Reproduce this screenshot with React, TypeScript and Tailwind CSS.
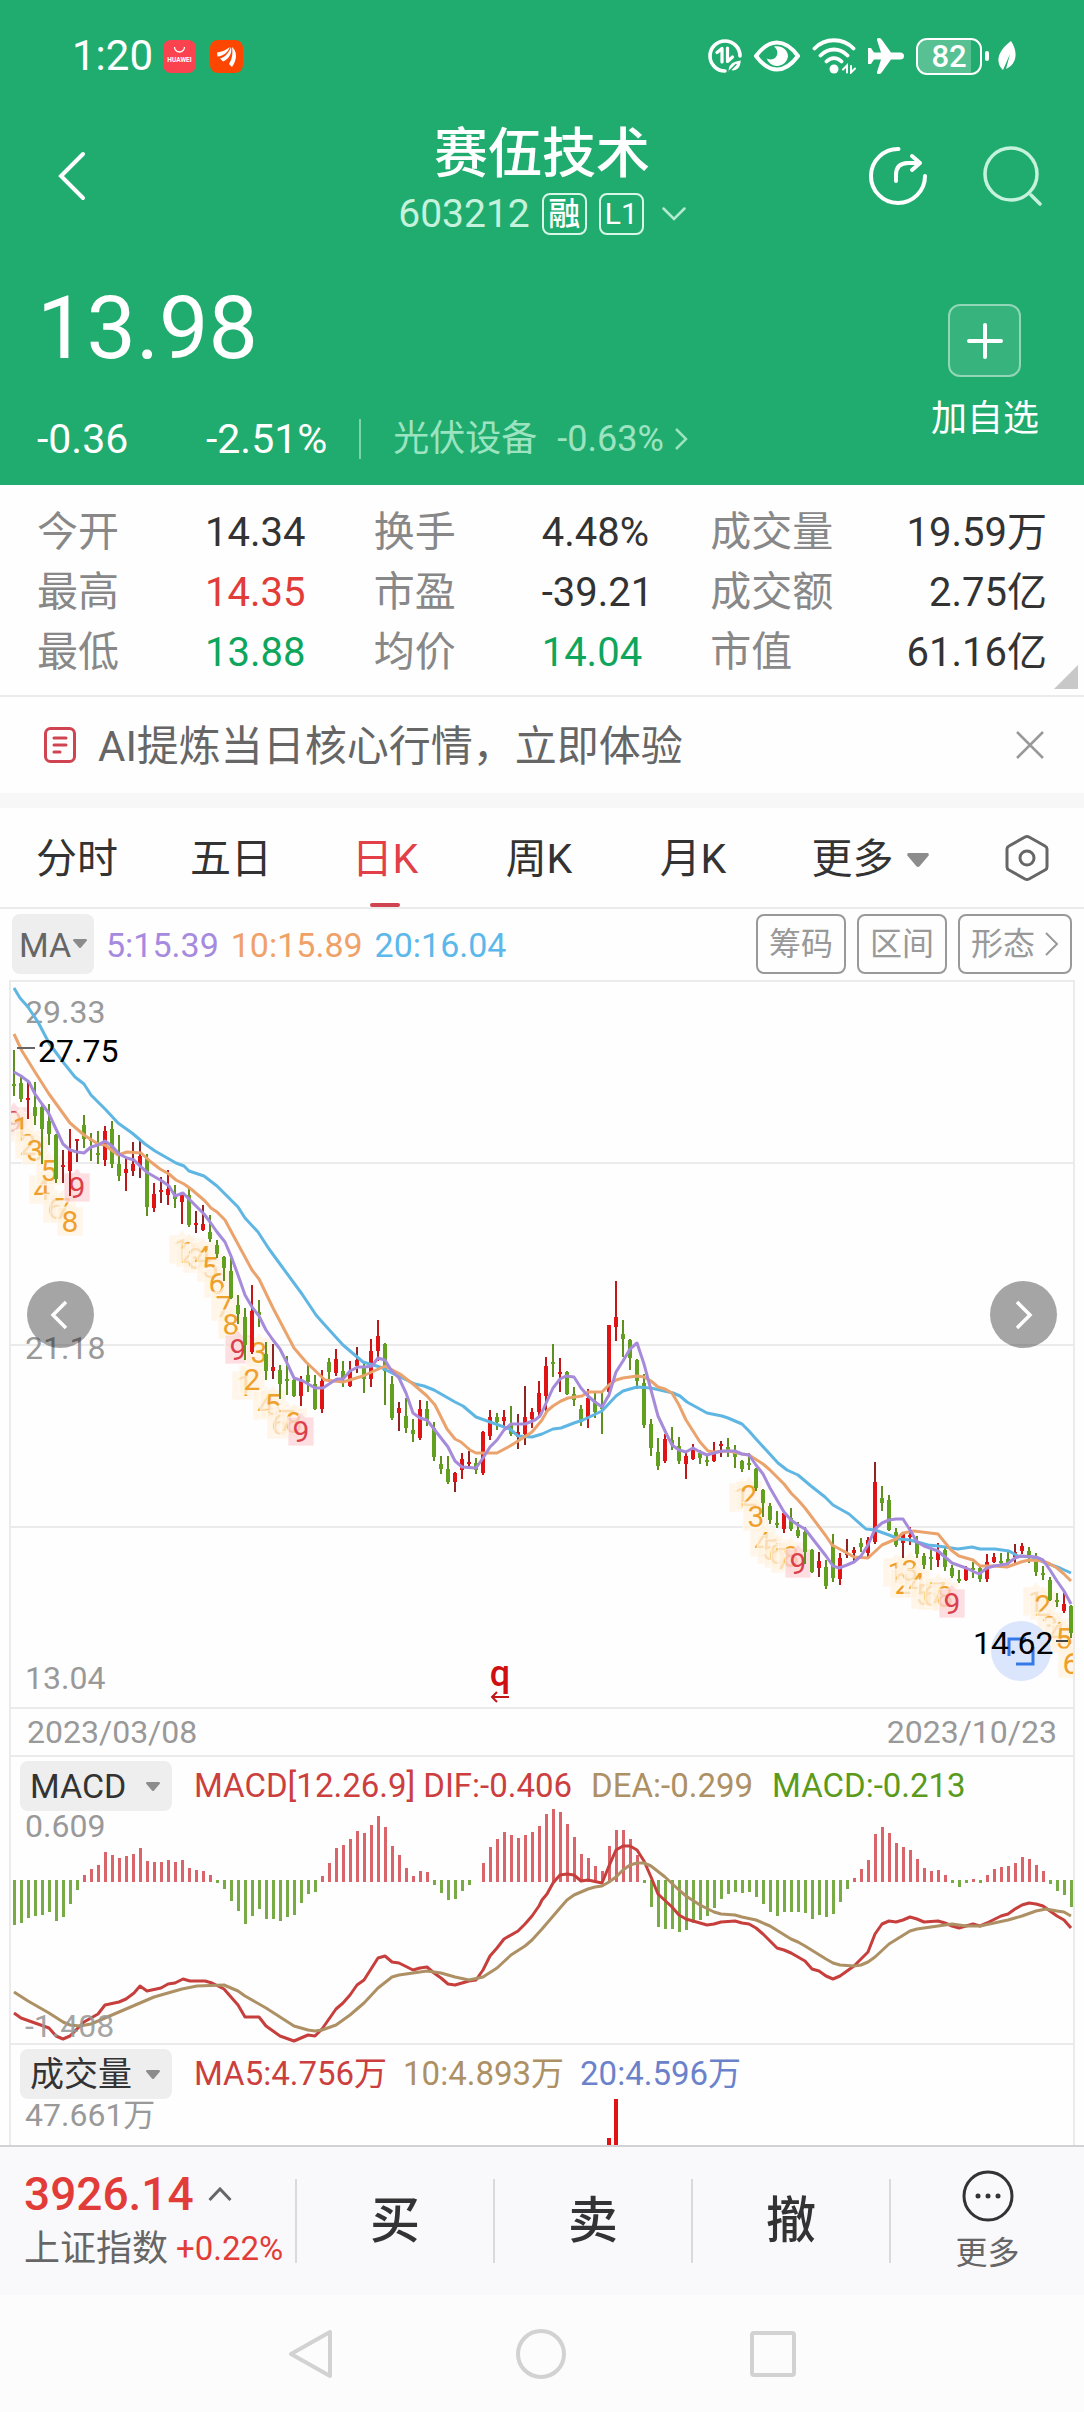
import type { ReactNode } from 'react';

type Candle = [number, number, number, number, 'g' | 'r' | 'd'];

// high, body top, body bottom, low (chart units), colour
const candles: Candle[] = [
  [70, 104, 106, 116, 'g'], [95, 103, 119, 122, 'g'], [100, 118, 120, 139, 'r'], [102, 127, 136, 145, 'g'],
  [125, 127, 149, 184, 'g'], [124, 141, 154, 165, 'g'], [154, 155, 199, 203, 'g'], [170, 185, 187, 203, 'd'],
  [149, 170, 191, 216, 'r'], [159, 159, 161, 182, 'd'], [135, 145, 159, 168, 'g'], [153, 159, 161, 181, 'g'],
  [151, 173, 175, 184, 'g'], [146, 151, 180, 186, 'r'], [141, 149, 184, 188, 'g'], [155, 184, 196, 201, 'g'],
  [177, 189, 193, 211, 'r'], [162, 184, 191, 196, 'd'], [160, 176, 186, 198, 'd'], [174, 179, 227, 236, 'g'],
  [203, 214, 228, 232, 'r'], [197, 210, 212, 223, 'd'], [190, 209, 215, 225, 'r'], [205, 216, 219, 228, 'g'],
  [214, 215, 222, 244, 'r'], [207, 215, 245, 247, 'g'], [231, 243, 245, 253, 'd'], [225, 244, 250, 251, 'd'],
  [235, 252, 259, 262, 'g'], [260, 265, 274, 278, 'g'], [276, 277, 288, 301, 'g'], [277, 291, 318, 319, 'g'],
  [315, 325, 334, 344, 'g'], [328, 337, 365, 380, 'g'], [305, 331, 372, 374, 'r'], [320, 332, 335, 347, 'g'],
  [362, 374, 391, 400, 'g'], [364, 387, 391, 399, 'd'], [385, 390, 404, 419, 'g'], [376, 399, 401, 415, 'g'],
  [399, 400, 416, 417, 'g'], [396, 400, 416, 426, 'r'], [384, 395, 402, 412, 'g'], [395, 404, 429, 430, 'g'],
  [390, 401, 429, 433, 'r'], [378, 382, 392, 400, 'g'], [369, 379, 393, 396, 'r'], [381, 391, 399, 407, 'g'],
  [381, 391, 406, 407, 'r'], [367, 380, 386, 393, 'd'], [381, 386, 399, 413, 'g'], [359, 371, 399, 407, 'r'],
  [340, 356, 371, 381, 'r'], [363, 364, 391, 425, 'g'], [396, 404, 438, 440, 'g'], [422, 428, 433, 451, 'd'],
  [418, 436, 448, 453, 'g'], [439, 450, 454, 462, 'g'], [420, 429, 458, 460, 'r'], [421, 429, 440, 446, 'g'],
  [442, 448, 477, 481, 'g'], [476, 484, 489, 494, 'g'], [476, 489, 502, 504, 'g'], [492, 493, 502, 512, 'd'],
  [473, 479, 490, 499, 'r'], [471, 482, 484, 488, 'd'], [478, 483, 490, 494, 'g'], [451, 452, 493, 495, 'r'],
  [430, 437, 456, 460, 'r'], [433, 437, 442, 450, 'g'], [430, 437, 441, 447, 'r'], [426, 444, 454, 456, 'g'],
  [434, 452, 457, 469, 'd'], [406, 437, 454, 465, 'd'], [428, 432, 439, 448, 'r'], [401, 413, 432, 437, 'r'],
  [377, 386, 416, 431, 'r'], [364, 382, 384, 397, 'g'], [378, 392, 394, 412, 'r'], [391, 392, 414, 415, 'g'],
  [407, 414, 420, 426, 'g'], [425, 429, 442, 446, 'g'], [409, 418, 438, 448, 'r'], [413, 421, 432, 438, 'g'],
  [413, 427, 429, 454, 'g'], [345, 345, 412, 417, 'r'], [301, 337, 347, 361, 'r'], [340, 354, 359, 377, 'g'],
  [359, 360, 378, 390, 'g'], [379, 380, 401, 409, 'g'], [394, 403, 445, 448, 'g'], [439, 444, 468, 476, 'g'],
  [458, 472, 486, 490, 'g'], [454, 459, 481, 483, 'r'], [447, 460, 465, 470, 'g'], [457, 466, 481, 484, 'g'],
  [473, 476, 484, 499, 'r'], [464, 468, 479, 480, 'r'], [470, 473, 478, 484, 'g'], [475, 480, 482, 486, 'g'],
  [462, 471, 481, 482, 'r'], [461, 464, 466, 477, 'd'], [458, 467, 472, 477, 'g'], [465, 472, 477, 488, 'g'],
  [480, 481, 489, 492, 'g'], [473, 483, 485, 490, 'g'], [488, 489, 508, 511, 'g'], [509, 510, 523, 537, 'g'],
  [523, 526, 540, 544, 'g'], [531, 543, 545, 548, 'g'], [532, 533, 549, 553, 'r'], [528, 538, 549, 551, 'g'],
  [542, 550, 556, 558, 'g'], [547, 552, 572, 584, 'g'], [569, 570, 592, 593, 'g'], [572, 581, 588, 597, 'd'],
  [580, 587, 606, 609, 'g'], [554, 565, 598, 602, 'g'], [573, 578, 599, 605, 'r'], [559, 573, 575, 578, 'd'],
  [567, 570, 573, 582, 'd'], [558, 563, 567, 572, 'g'], [557, 560, 573, 577, 'r'], [482, 502, 562, 564, 'd'],
  [506, 518, 523, 531, 'g'], [515, 520, 550, 551, 'g'], [548, 552, 565, 567, 'g'], [553, 554, 563, 578, 'd'],
  [547, 555, 557, 565, 'r'], [556, 561, 574, 578, 'g'], [573, 576, 585, 589, 'g'], [570, 577, 579, 590, 'g'],
  [563, 571, 580, 587, 'r'], [568, 570, 587, 591, 'g'], [585, 588, 596, 598, 'g'], [590, 599, 601, 603, 'g'],
  [586, 588, 600, 601, 'r'], [582, 588, 590, 598, 'g'], [587, 588, 599, 602, 'g'], [574, 582, 599, 602, 'r'],
  [573, 577, 582, 583, 'r'], [573, 581, 583, 585, 'g'], [571, 579, 583, 585, 'g'], [564, 572, 577, 583, 'd'],
  [563, 566, 571, 574, 'r'], [567, 571, 575, 583, 'g'], [573, 582, 592, 596, 'g'], [586, 593, 595, 600, 'g'],
  [597, 600, 620, 621, 'g'], [613, 620, 622, 627, 'g'], [613, 624, 631, 633, 'r'], [625, 626, 653, 658, 'g'],
];

// [first candle index, first number, how many]
const countRuns = [[0, 9, 1], [1, 1, 9], [24, 1, 9], [33, 1, 9], [104, 1, 9], [126, 1, 9], [146, 1, 6]];

const ma20 = '14,8 20,18 28,27 38,42 49,63 63,82 75,97 84,104 91,115 106,130 118,143 132,153 145,164 155,171 176,183 184,186 189,191 204,196 217,206 227,216 238,227 245,238 258,252 269,269 280,284 302,314 316,335 323,343 343,365 363,382 380,387 394,394 415,404 424,406 434,410 455,422 463,426 476,437 490,442 510,449 518,456 532,457 542,454 553,449 561,448 574,443 583,440 602,431 616,416 623,411 637,407 651,408 673,413 680,416 687,422 707,433 722,436 728,438 742,444 749,451 756,459 778,483 787,490 798,495 811,506 825,517 833,525 849,534 866,549 875,550 889,555 899,559 910,560 928,565 938,566 958,569 972,567 980,569 995,569 1009,571 1018,576 1032,577 1046,583 1060,588 1071,593';
const ma10 = '14,54 22,71 35,92 49,114 70,143 84,155 98,164 105,165 118,175 127,172 141,173 151,182 160,189 169,194 176,200 184,204 191,209 205,221 211,228 217,232 225,240 239,266 252,290 259,299 273,328 294,368 306,382 325,400 343,402 363,396 385,386 400,394 413,404 427,416 435,425 447,449 455,459 461,462 470,470 476,473 497,473 510,466 518,461 532,452 542,440 547,431 553,426 561,421 568,418 582,416 588,412 602,412 609,405 616,400 623,398 637,396 644,397 651,401 658,407 665,409 672,413 679,425 686,440 700,462 708,471 714,472 729,471 742,474 749,475 763,484 770,490 784,504 791,513 798,520 805,528 826,556 832,565 847,573 854,577 868,578 882,565 896,559 903,553 914,551 938,554 951,570 959,576 973,580 980,586 994,586 1007,587 1021,582 1029,580 1043,581 1050,584 1057,588 1064,594 1071,601';
const ma5 = '14,92 21,96 29,102 35,114 42,124 48,132 56,149 63,164 70,170 77,172 84,173 91,167 98,165 105,161 112,166 119,174 127,178 134,180 141,187 148,193 162,201 169,206 175,216 183,213 189,219 204,234 210,242 217,252 225,262 231,276 238,295 245,315 252,327 259,336 266,350 273,360 280,369 287,383 294,398 303,401 315,408 323,408 332,402 337,399 343,399 350,391 358,387 365,387 372,386 378,378 385,380 391,390 399,398 406,413 413,433 420,438 427,440 441,458 448,467 455,481 462,487 476,488 483,478 490,467 497,460 504,450 511,444 525,444 535,440 540,436 542,432 553,408 560,399 566,396 574,397 581,408 588,416 595,422 602,427 609,415 616,392 623,381 630,369 637,363 644,384 651,410 658,436 666,453 672,465 679,470 686,472 693,468 700,472 707,475 714,473 722,471 735,471 742,474 749,475 756,485 763,494 770,508 784,532 791,540 798,545 805,549 812,558 826,576 833,586 839,588 847,585 854,582 861,576 868,565 875,549 882,543 889,540 896,539 903,539 910,550 917,562 924,566 938,571 952,583 966,588 979,594 987,588 994,586 1007,584 1015,578 1021,576 1036,577 1043,580 1050,590 1057,601 1064,611 1071,624';

const macdBars = [
  -45, -43, -38, -36, -35, -32, -41, -37, -24, -10, 7, 13, 17, 30, 27, 24, 26, 28, 34, 21, 20, 20, 22, 20, 22, 14, 12, 11, 7,
  -3, -9, -21, -31, -44, -36, -29, -39, -39, -41, -37, -35, -23, -14, -12, 6, 19, 34, 37, 43, 51, 49, 57, 66, 55, 36, 27, 14,
  6, 11, 10, -5, -13, -20, -19, -11, -5, 0, 19, 35, 43, 50, 47, 44, 47, 50, 56, 68, 73, 70, 58, 45, 28, 24, 16, 11, 36, 52, 52,
  43, 27, -3, -27, -47, -49, -49, -52, -50, -43, -40, -36, -28, -19, -14, -12, -13, -12, -17, -24, -32, -36, -32, -32, -32,
  -33, -39, -35, -37, -34, -22, -9, 4, 13, 22, 48, 55, 49, 39, 35, 32, 23, 14, 11, 12, 7, -3, -7, -3, 3, -3, 7, 13, 15, 16,
  19, 25, 23, 17, 11, -4, -11, -15, -27,
];

const difLine = '14,257 21,262 35,267 49,272 56,280 63,283 70,280 84,266 98,258 105,249 119,246 126,243 134,237 140,230 147,235 161,232 168,228 175,227 183,223 190,225 205,225 212,227 224,233 231,241 238,249 245,261 259,261 266,270 280,280 294,285 308,279 315,280 322,273 336,253 343,247 350,239 357,229 364,224 378,202 385,200 392,206 399,207 413,214 420,212 427,211 434,217 441,222 448,228 455,229 469,225 476,224 483,214 490,200 497,192 504,183 518,175 525,168 532,160 539,150 542,144 547,138 553,127 560,119 567,118 574,119 581,125 588,124 602,127 609,110 616,94 623,90 630,90 637,94 644,105 651,121 658,138 672,151 679,159 686,163 700,167 707,169 714,168 721,166 735,165 742,167 749,168 756,172 763,178 777,192 784,194 791,197 805,205 812,213 819,215 826,220 833,223 840,220 854,210 868,196 875,178 882,168 889,165 896,166 903,164 910,161 917,163 924,166 938,165 945,167 952,170 959,172 966,170 973,168 980,170 987,167 1001,160 1008,158 1015,153 1022,149 1029,147 1036,148 1043,150 1050,155 1057,160 1064,164 1071,172';
const deaLine = '14,236 28,245 49,257 63,266 70,269 80,270 91,268 105,262 119,256 133,250 140,247 154,241 168,237 182,233 197,230 224,229 238,235 245,240 266,252 280,261 294,270 308,274 315,275 322,274 336,269 350,259 364,247 378,232 392,221 399,219 413,217 427,215 441,217 455,221 469,224 483,221 497,212 511,199 525,190 532,184 542,173 560,152 567,144 574,139 588,133 595,131 602,130 609,126 616,121 623,114 630,109 637,107 644,107 651,110 665,121 679,134 686,140 700,149 714,156 721,158 735,159 742,161 756,164 770,170 791,183 798,186 805,190 826,203 833,207 840,209 854,210 861,209 868,206 875,201 889,188 910,175 917,173 938,170 952,168 966,170 980,170 994,167 1008,164 1022,160 1036,155 1046,153 1057,155 1064,156 1071,160';

const stats = [
  [
    { label: '今开', value: '14.34', color: 'text-[#333]' },
    { label: '最高', value: '14.35', color: 'text-[#e23c39]' },
    { label: '最低', value: '13.88', color: 'text-[#0ea55c]' },
  ],
  [
    { label: '换手', value: '4.48%', color: 'text-[#333]' },
    { label: '市盈', value: '-39.21', color: 'text-[#333]' },
    { label: '均价', value: '14.04', color: 'text-[#0ea55c]' },
  ],
  [
    { label: '成交量', value: '19.59万', color: 'text-[#333]' },
    { label: '成交额', value: '2.75亿', color: 'text-[#333]' },
    { label: '市值', value: '61.16亿', color: 'text-[#333]' },
  ],
];

const tabs = ['分时', '五日', '日K', '周K', '月K'];

const xAt = (i: number) => 14 + i * 7;

const Caret = ({ className }: { className: string }) => (
  <svg viewBox="0 0 14 9" className={className} fill="#8c8c8c">
    <path d="M1 0h12q1 0 1 1.500L8 8.500q-1 1-2 0L0 1.500Q0 0 1 0z" />
  </svg>
);

const StatusBar = () => (
  <div className="flex h-28 items-center justify-between pl-[72px] pr-[68px] text-white">
    <div className="flex items-center">
      <span className="text-[42px] leading-none">1:20</span>
      <svg viewBox="0 0 33 33" className="ml-[10px] size-[33px]">
        <rect width="33" height="33" rx="8" fill="#fb4350" />
        <path d="M11.500 7a5 5 0 0 0 10 0" fill="none" stroke="#fff" strokeWidth="1.300" />
        <text x="16.500" y="21.500" textAnchor="middle" fontSize="6.500" fontWeight="700" fill="#fff">HUAWEI</text>
      </svg>
      <svg viewBox="0 0 33 33" className="ml-[14px] size-[33px]">
        <rect width="33" height="33" rx="8" fill="#fd4700" />
        <path d="M7 12.500c5-.5 9-2.500 13-5.500-2 5-6 9-12.500 9.500zM10 18.500c6-2 9-6 11-11.500 1.500 6-2 12-8 14.500zM19 24c3-5 4-10 3-17 3.500 3 4 6 4 10-.5 4-2 7-4 10z" fill="#fff" />
      </svg>
    </div>
    <div className="flex items-center gap-3">
      <svg viewBox="0 0 34 34" className="size-[34px]" fill="none" stroke="#fff" strokeLinecap="round">
        <path d="M32 17A15 15 0 1 0 17 32" strokeWidth="3.600" />
        <path d="M9 13.500l5-4V23M19.500 9v13.500l5-4.500" strokeWidth="3.200" strokeLinejoin="round" />
        <path d="M20 33c-1-8 4-11 13.500-12.500C33.500 29 29 34 22 31.500l6-6" fill="#fff" stroke="#21ac6f" strokeWidth="1.500" />
      </svg>
      <svg viewBox="0 0 46 32" className="h-8 w-[46px]">
        <path d="M2 16Q12 2.500 23 2.500T44 16Q34 29.500 23 29.500T2 16z" fill="none" stroke="#fff" strokeWidth="4" strokeLinejoin="round" />
        <path d="M20 6.500c8-1.500 14 3.500 14 10A11 11 0 0 1 12.500 18c2 2.500 9 2 10.500-3 1-3.500 0-6-3-8.500z" fill="#fff" />
      </svg>
      <svg viewBox="0 0 44 36" className="h-9 w-11" fill="none" stroke="#fff" strokeWidth="3.800" strokeLinecap="round">
        <path d="M2.500 10.500C13-.5 31-.5 41.500 10.500M8.500 17.500c8-8 19-8 27 0M14.500 23.500c4.500-4.500 10.500-4.500 15 0" />
        <circle cx="22" cy="31" r="4.500" fill="#fff" stroke="none" />
        <path d="M31 31.500l4-4v7M39 28v6.500l4-4" strokeWidth="2" />
      </svg>
      <svg viewBox="0 0 36 36" className="size-9" fill="#fff">
        <path d="M9 2q-.5-2 2-2 2 0 3 2l9 12.500h9q4 0 4 3.500t-4 3.500h-9L14 34q-1 2-3 2-2.500 0-2-2l4-12.500H6L3 26H0V10h3l3 4.500h7z" />
      </svg>
      <div className="flex items-center gap-[3px]">
        <div className="relative flex h-[37px] w-[66px] items-center justify-center overflow-hidden rounded-[11px] border-2 border-white">
          <div className="absolute inset-y-0 left-0 w-[85%] bg-white/25" />
          <span className="relative text-[31px] font-medium leading-none">82</span>
        </div>
        <div className="h-[10px] w-1 rounded-sm bg-white" />
        <svg viewBox="0 0 18 30" className="ml-[6px] h-[30px] w-[18px]">
          <path d="M13 0c8 12 5 24-5 28l4-15-7 16C-4 20 1 9 13 0z" fill="#fff" />
        </svg>
      </div>
    </div>
  </div>
);

const Header = () => (
  <header className="h-[485px] bg-[#21ac6f] text-white">
    <StatusBar />
    <div className="grid h-[128px] grid-cols-[1fr_auto_1fr] items-center px-[42px]">
      <button aria-label="返回" className="justify-self-start pl-[15px]">
        <svg viewBox="0 0 30 50" className="h-[50px] w-[30px]" fill="none" stroke="currentColor" strokeWidth="4" strokeLinecap="round">
          <path d="M26 3L4 25l22 22" />
        </svg>
      </button>
      <div className="flex flex-col items-center pt-1">
        <h1 className="text-[54px] font-medium leading-[72px]">赛伍技术</h1>
        <div className="flex h-[46px] items-center">
          <span className="text-[39px] leading-none text-[#c5f2dc]">603212</span>
          <span className="ml-3 flex h-[42px] w-[45px] items-center justify-center rounded-lg border-2 border-[#d9f7e8] text-[32px] font-medium leading-none">融</span>
          <span className="ml-3 flex h-[42px] w-[45px] items-center justify-center rounded-lg border-2 border-[#d9f7e8] text-[30px] leading-none">L1</span>
          <svg viewBox="0 0 24 14" className="ml-[18px] h-[14px] w-6" fill="none" stroke="#b5ead0" strokeWidth="2.500" strokeLinecap="round">
            <path d="M1.500 1.500L12 12 22.500 1.500" />
          </svg>
        </div>
      </div>
      <div className="flex items-center gap-[54px] justify-self-end">
        <button aria-label="分享">
          <svg viewBox="0 0 60 60" className="size-[60px]" fill="none" stroke="currentColor" strokeWidth="4" strokeLinecap="round" strokeLinejoin="round">
            <path d="M30.500 3A27 27 0 1 0 57 30" />
            <path d="M28 35v-6q0-12 12-12h12M44 10l8 7-8 7" />
          </svg>
        </button>
        <button aria-label="搜索">
          <svg viewBox="0 0 60 60" className="size-[60px]" fill="none" stroke="#c5f2dc" strokeWidth="3.500" strokeLinecap="round">
            <circle cx="29" cy="28" r="26" />
            <path d="M49 49l9 9" />
          </svg>
        </button>
      </div>
    </div>
    <div className="flex justify-between pl-[37px] pr-[45px]">
      <div>
        <div className="flex h-[175px] items-center text-[88px] leading-none">13.98</div>
        <div className="flex h-12 items-center text-[41px] leading-none">
          <span className="w-[169px]">-0.36</span>
          <span>-2.51%</span>
          <span className="ml-8 h-10 w-[2px] bg-[#7fd3ab]" />
          <a href="#sector" className="ml-8 flex items-center text-[36px] text-[#9ce4c1]">
            光伏设备
            <span className="ml-5">-0.63%</span>
            <svg viewBox="0 0 14 24" className="ml-[10px] h-6 w-[14px]" fill="none" stroke="currentColor" strokeWidth="2.500">
              <path d="M2 2l10 10L2 22" />
            </svg>
          </a>
        </div>
      </div>
      <button className="flex flex-col items-center pt-[64px]">
        <span className="flex size-[73px] items-center justify-center rounded-xl border-2 border-[#90d6b7] bg-white/10">
          <svg viewBox="0 0 36 36" className="size-9" stroke="currentColor" strokeWidth="4" strokeLinecap="round">
            <path d="M18 2v32M2 18h32" />
          </svg>
        </span>
        <span className="mt-[22px] text-[36px] leading-[40px]">加自选</span>
      </button>
    </div>
  </header>
);

const Stats = () => (
  <section className="relative grid h-[212px] grid-cols-3 border-b-2 border-[#ebebeb] px-[37px] pt-[18px]">
    {stats.map((column, i) => (
      <dl key={i}>
        {column.map((item) => (
          <div key={item.label} className="flex h-[60px] items-center text-[40px]">
            <dt className="w-[168px] text-[41px] text-[#888]">{item.label}</dt>
            <dd className={`${item.color} ${i === 2 ? 'ml-auto' : ''}`}>{item.value}</dd>
          </div>
        ))}
      </dl>
    ))}
    <svg viewBox="0 0 24 24" className="absolute bottom-[6px] right-[6px] size-6">
      <path d="M24 0v24H0z" fill="#c8c8c8" />
    </svg>
  </section>
);

const AiBanner = () => (
  <section className="flex h-24 items-center pl-11 pr-10">
    <svg viewBox="0 0 32 36" className="h-9 w-8" fill="none" stroke="#cf4450" strokeWidth="3" strokeLinecap="round">
      <rect x="1.500" y="1.500" width="29" height="33" rx="5" />
      <path d="M10 11h12M10 18h12M10 25h6" />
    </svg>
    <a href="#ai" className="ml-[22px] pt-1 text-[42px] leading-none text-[#666]">AI提炼当日核心行情，立即体验</a>
    <button aria-label="关闭" className="ml-auto">
      <svg viewBox="0 0 28 28" className="size-7" stroke="#999" strokeWidth="2.500">
        <path d="M1 1l26 26M27 1L1 27" />
      </svg>
    </button>
  </section>
);

const PeriodTabs = () => (
  <nav className="grid h-[101px] grid-cols-[repeat(5,154fr)_200fr_114fr] border-b-2 border-[#ebebeb] text-[41px] text-[#333]">
    {tabs.map((tab) => (
      <button
        key={tab}
        className={`relative flex items-center justify-center pt-1 ${tab === '日K' ? 'text-[#e23f49]' : ''}`}
      >
        {tab}
        {tab === '日K' && <span className="absolute bottom-0 left-1/2 h-1 w-[30px] -translate-x-1/2 rounded-sm bg-[#cf4450]" />}
      </button>
    ))}
    <button className="flex items-center justify-center gap-[13px] pt-1">
      更多
      <Caret className="h-[14px] w-[22px]" />
    </button>
    <button aria-label="设置" className="flex items-center justify-center">
      <svg viewBox="0 0 44 48" className="h-12 w-11" fill="none" stroke="#666" strokeWidth="3">
        <path d="M20 3q2-1 4 0l16 9q2 1 2 3v18q0 2-2 3l-16 9q-2 1-4 0L4 36q-2-1-2-3V15q0-2 2-3z" />
        <circle cx="22" cy="24" r="7" />
      </svg>
    </button>
  </nav>
);

const ToolButton = ({ children }: { children: ReactNode }) => (
  <button className="flex h-[60px] items-center rounded-lg border-2 border-[#999] px-[11px] text-[32px] text-[#999]">
    {children}
  </button>
);

const MaToolbar = () => (
  <div className="flex h-[71px] items-center pb-[2px] pl-3 pr-3 text-[34px] leading-[40px]">
    <button className="flex h-[60px] w-[82px] items-center justify-center gap-[2px] rounded-lg bg-[#eee] text-[#666]">
      <span className="pt-[2px]">MA</span>
      <Caret className="h-[9px] w-[14px]" />
    </button>
    <div className="flex gap-3 pl-3 pt-[2px]">
      <span className="text-[#a58ae0]">5:15.39</span>
      <span className="text-[#f0a168]">10:15.89</span>
      <span className="text-[#5cb8ea]">20:16.04</span>
    </div>
    <div className="ml-auto flex gap-[11px]">
      <ToolButton>筹码</ToolButton>
      <ToolButton>区间</ToolButton>
      <ToolButton>
        形态
        <svg viewBox="0 0 14 24" className="ml-[10px] h-6 w-[14px]" fill="none" stroke="currentColor" strokeWidth="2">
          <path d="M1 1l11 11L1 23" />
        </svg>
      </ToolButton>
    </div>
  </div>
);

const KLineChart = () => (
  <div className="relative">
    <svg viewBox="11 0 1062 727" className="block w-full" fontSize="32">
      <g stroke="#ebebeb" strokeWidth="2">
        <path d="M11 1h1062M11 183h1062M11 365h1062M11 547h1062" />
      </g>
      <g fill="#999">
        <text x="25" y="43">29.33</text>
        <text x="25" y="379">21.18</text>
        <text x="25" y="709">13.04</text>
      </g>

      {/* nine-turn counters */}
      {countRuns.map(([start, first, count]) =>
        Array.from({ length: count }, (_, k) => {
          const n = first + k;
          const x = xAt(start + k);
          const y = candles[start + k][3] + 8;
          return (
            <g key={start + k}>
              <path
                d={`M${x - 13} ${y + 3}h9l4-5 4 5h9v29h-26z`}
                fill={n === 9 ? '#fcd4d8' : '#fff1e0'}
                fillOpacity="0.75"
                stroke="#fff"
                strokeOpacity="0.7"
              />
              <text x={x} y={y + 28} textAnchor="middle" fontSize="30" fill={n === 9 ? '#db3f4c' : '#eea02c'}>{n}</text>
            </g>
          );
        })
      )}

      {candles.map(([high, top, bottom, low, color], i) => (
        <g key={i}>
          <rect x={xAt(i) - 1} y={high} width="2" height={low - high} fill={color === 'g' ? '#5f8f1f' : color === 'r' ? '#c01818' : '#8f2424'} />
          <rect x={xAt(i) - 2} y={top} width="4" height={bottom - top} fill={color === 'g' ? '#62a01f' : '#e01414'} />
        </g>
      ))}

      <g fill="none" strokeWidth="3" strokeLinejoin="round">
        <polyline points={ma20} stroke="#5fb6e3" />
        <polyline points={ma10} stroke="#eba36d" />
        <polyline points={ma5} stroke="#a68bdb" />
      </g>

      <path d="M17 68h18" stroke="#666" strokeWidth="2" />
      <text x="38" y="82">27.75</text>

      <circle cx="1021" cy="671" r="30" fill="#dbe6fc" />
      <path d="M1009 676v-17h17M1033 667v17h-17" fill="none" stroke="#3479e8" strokeWidth="3" />
      <text x="973" y="674">14.62</text>
      <path d="M1056 661h12" stroke="#444" strokeWidth="2" />

      <text x="500" y="706" textAnchor="middle" fontSize="36" fontWeight="500" fill="#d01010">q</text>
      <path d="M509 717h-17m5-5l-5 5 5 5" fill="none" stroke="#c01818" strokeWidth="2" />
    </svg>
    <button aria-label="上一段" className="absolute left-4 top-[301px] flex size-[67px] items-center justify-center rounded-full bg-black/35">
      <svg viewBox="0 0 18 30" className="mr-1 h-[30px] w-[18px]" fill="none" stroke="#fff" strokeWidth="3.500">
        <path d="M16 2L3 15l13 13" />
      </svg>
    </button>
    <button aria-label="下一段" className="absolute right-4 top-[301px] flex size-[67px] items-center justify-center rounded-full bg-black/35">
      <svg viewBox="0 0 18 30" className="h-[30px] w-[18px]" fill="none" stroke="#fff" strokeWidth="3.500">
        <path d="M2 2l13 13L2 28" />
      </svg>
    </button>
  </div>
);

const IndicatorHead = ({ name, children }: { name: string; children: ReactNode }) => (
  <div className="flex h-[55px] items-start pl-[9px] pt-1 text-[33px] leading-[50px]">
    <button className="mr-[22px] flex h-[50px] w-[152px] items-center justify-between rounded-lg bg-[#eee] pl-[10px] pr-3 text-[34px] text-[#333]">
      <span>{name}</span>
      <Caret className="h-[9px] w-[14px]" />
    </button>
    {children}
  </div>
);

const MacdPanel = () => (
  <div className="border-t-2 border-[#ebebeb]">
    <IndicatorHead name="MACD">
      <span className="text-[#cc3f3f]">MACD[12.26.9]</span>
      <span className="ml-[8px] text-[#cc3f3f]">DIF:-0.406</span>
      <span className="ml-[19px] text-[#ad9064]">DEA:-0.299</span>
      <span className="ml-[19px] text-[#5b9a1a]">MACD:-0.213</span>
    </IndicatorHead>
    <svg viewBox="11 56 1062 231" className="block w-full overflow-visible" fontSize="32">
      <text x="25" y="81" fill="#999">0.609</text>
      {macdBars.map((v, i) =>
        v === 0 ? null : (
          <rect
            key={i}
            x={xAt(i) - 1}
            y={v > 0 ? 126 - v : 124}
            width="3"
            height={Math.abs(v)}
            fill={v > 0 ? '#d9656a' : '#78ab45'}
          />
        )
      )}
      <g fill="none" strokeWidth="3" strokeLinejoin="round">
        <polyline points={difLine} stroke="#c63f3c" />
        <polyline points={deaLine} stroke="#ad9064" />
      </g>
      <text x="25" y="281" fill="#999" fillOpacity="0.9">-1.408</text>
    </svg>
  </div>
);

const VolumePanel = () => (
  <div className="border-t-2 border-[#ebebeb]">
    <IndicatorHead name="成交量">
      <span className="text-[#cc3f3f]">MA5:4.756万</span>
      <span className="ml-4 text-[#ad9064]">10:4.893万</span>
      <span className="ml-4 text-[#6b82cb]">20:4.596万</span>
    </IndicatorHead>
    <svg viewBox="11 0 1062 45" className="block w-full overflow-visible" fontSize="32">
      <text x="25" y="26" fill="#999">47.661万</text>
      <rect x="607" y="38" width="4" height="7" fill="#e01414" />
      <rect x="614" y="-1" width="4" height="46" fill="#e01414" />
    </svg>
  </div>
);

const TradeBar = () => (
  <footer className="grid h-[150px] grid-cols-[295fr_198fr_198fr_198fr_195fr] border-t-2 border-[#d2d2d6] bg-[#f9f9fb] text-[#333]">
    <div className="flex flex-col whitespace-nowrap pl-6 pt-[20px]">
      <div className="flex items-center gap-[14px] text-[46px] font-medium leading-[54px] text-[#e23c39]">
        3926.14
        <svg viewBox="0 0 24 14" className="h-[14px] w-6" fill="none" stroke="#666" strokeWidth="3">
          <path d="M1.500 13L12 2l10.500 11" />
        </svg>
      </div>
      <div className="flex items-center text-[36px] leading-[56px] text-[#666]">
        上证指数
        <span className="ml-2 text-[33px] text-[#e23c39]">+0.22%</span>
      </div>
    </div>
    {['买', '卖', '撤'].map((label) => (
      <button key={label} className="flex items-center text-[50px] font-medium">
        <span className="h-[84px] w-[2px] bg-[#dadade]" />
        <span className="flex-1">{label}</span>
      </button>
    ))}
    <button className="flex items-center text-[32px] text-[#666]">
      <span className="h-[84px] w-[2px] bg-[#dadade]" />
      <span className="flex flex-1 flex-col items-center pt-1">
        <svg viewBox="0 0 52 52" className="size-[52px]" fill="#333">
          <circle cx="26" cy="26" r="24" fill="none" stroke="#333" strokeWidth="3" />
          <circle cx="16" cy="26" r="2.500" />
          <circle cx="26" cy="26" r="2.500" />
          <circle cx="36" cy="26" r="2.500" />
        </svg>
        <span className="mt-2 leading-[46px]">更多</span>
      </span>
    </button>
  </footer>
);

const SystemNav = () => (
  <div className="flex h-[117px] items-center justify-center gap-[184px] bg-[#fcfcfc]">
    <button aria-label="后退">
      <svg viewBox="0 0 44 50" className="h-[50px] w-11" fill="none" stroke="#d2d2d2" strokeWidth="4" strokeLinejoin="round">
        <path d="M42 3v44L3 25z" />
      </svg>
    </button>
    <button aria-label="主页">
      <svg viewBox="0 0 50 50" className="size-[50px]" fill="none" stroke="#d2d2d2" strokeWidth="4">
        <circle cx="25" cy="25" r="23" />
      </svg>
    </button>
    <button aria-label="多任务">
      <svg viewBox="0 0 46 46" className="size-[46px]" fill="none" stroke="#d2d2d2" strokeWidth="4" strokeLinejoin="round">
        <rect x="2" y="2" width="42" height="42" rx="2" />
      </svg>
    </button>
  </div>
);

export default function App() {
  return (
    <div className="min-h-screen bg-[#fefefe] font-[Roboto,'Noto_Sans_CJK_SC',sans-serif] text-black">
      <Header />
      <Stats />
      <AiBanner />
      <div className="h-[15px] bg-[#f7f7f7]" />
      <PeriodTabs />
      <MaToolbar />
      <main className="mx-[9px] border-x-2 border-[#ebebeb]">
        <KLineChart />
        <div className="flex h-12 items-center justify-between border-t-2 border-[#ebebeb] px-4 text-[32px] text-[#999]">
          <span>2023/03/08</span>
          <span>2023/10/23</span>
        </div>
        <MacdPanel />
        <VolumePanel />
      </main>
      <TradeBar />
      <SystemNav />
    </div>
  );
}
